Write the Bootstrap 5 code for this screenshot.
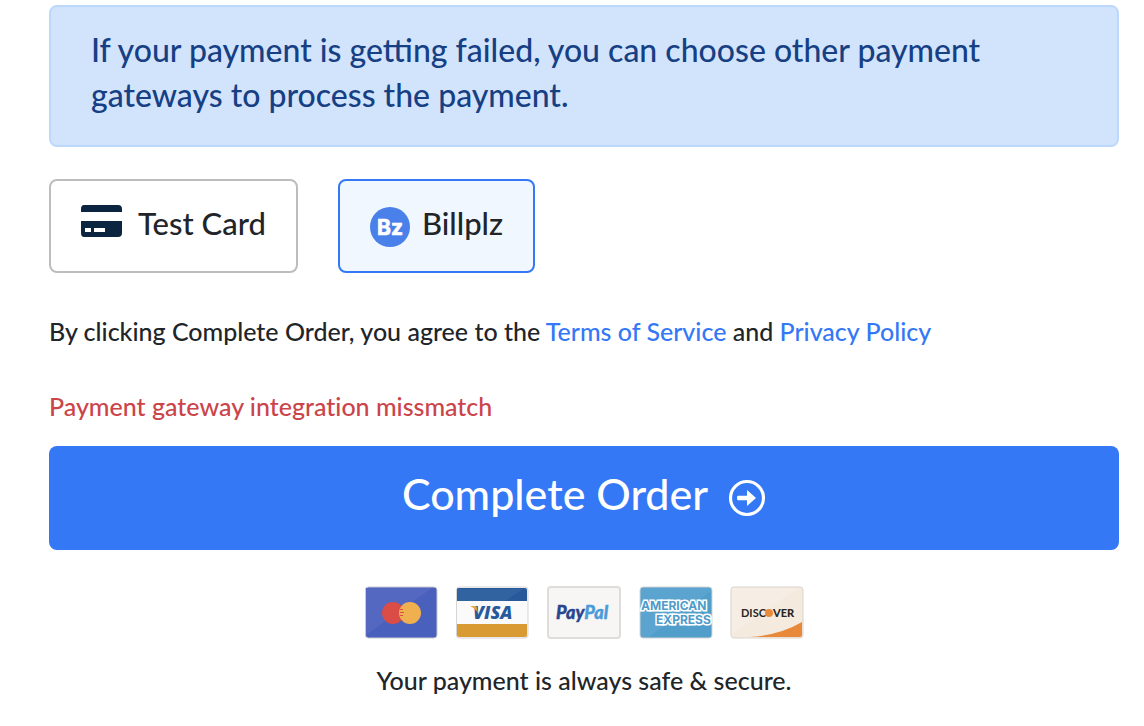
<!DOCTYPE html>
<html lang="en">
<head>
<meta charset="utf-8">
<meta name="viewport" content="width=device-width, initial-scale=1">
<title>Complete Order</title>
<link href="https://cdn.jsdelivr.net/npm/bootstrap@5.3.0/dist/css/bootstrap.min.css" rel="stylesheet">
<style>
  body { font-family: Lato, "Open Sans", sans-serif; font-weight: 500; font-size: 25px; line-height: 36px; color: #212529; background: #fff; font-variant-ligatures: none; }
  .checkout { padding: 5px 25px 24px 49px; }
  .notice { padding: 20px 40px 28px; margin-bottom: 32px; font-size: 32px; line-height: 45px; color: #163f84; background: #d2e4fc; border: 2px solid #bcd8fc; border-radius: 8px; font-variant-ligatures: normal; }
  .gateways { gap: 40px; margin-bottom: 40px; }
  .gateway { height: 94px; padding: 0 30px 6px; font-size: 31px; font-weight: 500; line-height: 45px; color: #212529; border: 2px solid #bdbdbd; border-radius: 8px; }
  .btn-check:checked + .gateway { color: #212529; background: #f0f7ff; border-color: #3478f6; }
  .test-logo { margin: 0 15px 4px 0; }
  .bz-logo { margin: 8px 12px 0 0; }
  .terms { margin-bottom: 39px; }
  .terms a { color: #3478f6; }
  .problem { margin-bottom: 22px; color: #cb444a; }
  .order-btn { height: 104px; margin-bottom: 36px; padding: 0 0 8px; gap: 20px; font-size: 43px; font-weight: 500; line-height: 60px; border: 0; border-radius: 8px; background: #3478f6; }
  .order-btn svg { margin-top: 8px; }
  .brands { gap: 17px; margin-bottom: 22px; }
</style>
</head>
<body>
<main class="checkout">
  <div class="notice" role="alert">If your payment is getting failed, you can choose other payment gateways to process the payment.</div>

  <form>
    <div class="gateways d-flex flex-wrap">
      <input class="btn-check" type="radio" name="gateway" id="gw-test">
      <label class="btn gateway d-flex align-items-center" for="gw-test">
        <svg class="test-logo" width="42" height="32" viewBox="1 0 42 32" aria-hidden="true"><path fill="#0b2440" fill-rule="evenodd" d="M4 0H38Q42 0 42 4V7H1V4Q1 0 4 0ZM1 16H42V28Q42 32 38 32H4Q1 32 1 28ZM5 23V27H11V23ZM14 23V27H25V23Z"/></svg>
        Test Card
      </label>
      <input class="btn-check" type="radio" name="gateway" id="gw-billplz" checked>
      <label class="btn gateway d-flex align-items-center" for="gw-billplz">
        <svg class="bz-logo" width="40" height="40" viewBox="0 0 40 40" aria-hidden="true"><circle cx="20" cy="20" r="20" fill="#4a80ea"/><text x="20" y="28" text-anchor="middle" font-family="Inter, sans-serif" font-size="21" font-weight="700" fill="#fff" stroke="#fff" stroke-width="0.7">Bz</text></svg>
        Billplz
      </label>
    </div>

    <p class="terms">By clicking Complete Order, you agree to the <a href="#terms" class="text-decoration-none">Terms of Service</a> and <a href="#privacy" class="text-decoration-none">Privacy Policy</a></p>
    <p class="problem">Payment gateway integration missmatch</p>

    <button type="button" class="btn btn-primary order-btn w-100 d-flex align-items-center justify-content-center">
      Complete Order
      <svg width="38" height="38" viewBox="0 0 38 38" aria-hidden="true"><circle cx="19" cy="19" r="16.5" fill="none" stroke="#fff" stroke-width="3.2"/><path fill="#fff" d="M10 16.7H19V11L28 19L19 27V21.3H10Q9 21.3 9 19T10 16.7Z"/></svg>
    </button>
  </form>

  <div class="brands d-flex justify-content-center">
    <svg width="74" height="54" viewBox="0 0 74 54" role="img" aria-label="Mastercard">
      <rect x="1.5" y="1" width="71.5" height="51" rx="3" fill="#4a60bd" stroke="#c9cbd4"/>
      <path fill="#5468c2" d="M2 2H68L2 49Z"/>
      <circle cx="29" cy="27" r="11" fill="#da4c46"/><circle cx="46" cy="27" r="11" fill="#f1b04f"/>
      <path stroke="#da4c46" d="M36 23.5H39M36 26.5H40M36 29.5H39"/>
    </svg>
    <svg width="74" height="54" viewBox="0 0 74 54" role="img" aria-label="Visa">
      <rect x="1.5" y="1" width="71.5" height="51" rx="3" fill="#fafafa" stroke="#d5d5d5"/>
      <path fill="#28599a" d="M2 3Q2 2 4 2H70Q72 2 72 4V15H2Z"/><path fill="#3163a1" d="M2 3H68L50 15H2Z"/>
      <path fill="#d99a33" d="M2 38H72V49Q72 51 70 51H4Q2 51 2 49Z"/>
      <text x="18" y="33" font-family="Open Sans, sans-serif" font-size="18" font-weight="800" font-style="italic" fill="#28599a">VISA</text>
      <path fill="#e8a53c" d="M15 20H20Q22 20 22 23L23 27Q20 22 15 20Z"/>
    </svg>
    <svg width="76" height="54" viewBox="0 0 76 54" role="img" aria-label="PayPal">
      <rect x="2" y="1" width="72" height="51" rx="3" fill="#f7f6f5" stroke="#dedddb" stroke-width="2"/>
      <text x="10" y="33" font-family="Lato, sans-serif" font-size="18" font-weight="900" font-style="italic" stroke-width="0.4"><tspan fill="#28458f" stroke="#28458f">Pay</tspan><tspan fill="#4a9bd8" stroke="#4a9bd8">Pal</tspan></text>
    </svg>
    <svg width="74" height="54" viewBox="0 0 74 54" role="img" aria-label="American Express">
      <rect x="1" y="1" width="72" height="51" rx="3" fill="#519ecb" stroke="#d5d5d5"/>
      <path fill="#5ba4cf" d="M2 2H72V5L10 51H2Z"/>
      <g font-family="Inter, sans-serif" font-weight="700" font-size="12" fill="#4f9bc9" stroke="#fff" stroke-width="3" paint-order="stroke"><text x="2" y="24">AMERICAN</text><text x="17" y="38">EXPRESS</text></g>
    </svg>
    <svg width="74" height="54" viewBox="0 0 74 54" role="img" aria-label="Discover">
      <rect x="1" y="1" width="72" height="51" rx="3" fill="#f4eade" stroke="#d9d4ce"/>
      <path fill="#f6eee4" d="M2 2H68L2 48Z"/>
      <path fill="#e78939" d="M20 51Q50 49 72 36V49Q72 51 70 51Z"/>
      <g font-family="Lato, sans-serif" font-size="11" font-weight="700" fill="#2b2522"><text x="11" y="31">DISC</text><text x="43" y="31" font-weight="900">VER</text></g>
      <circle cx="39" cy="27" r="4" fill="#e88b3d"/>
    </svg>
  </div>
  <p class="text-center mb-0">Your payment is always safe &amp; secure.</p>
</main>
<script src="https://cdn.jsdelivr.net/npm/bootstrap@5.3.0/dist/js/bootstrap.bundle.min.js"></script>
</body>
</html>
